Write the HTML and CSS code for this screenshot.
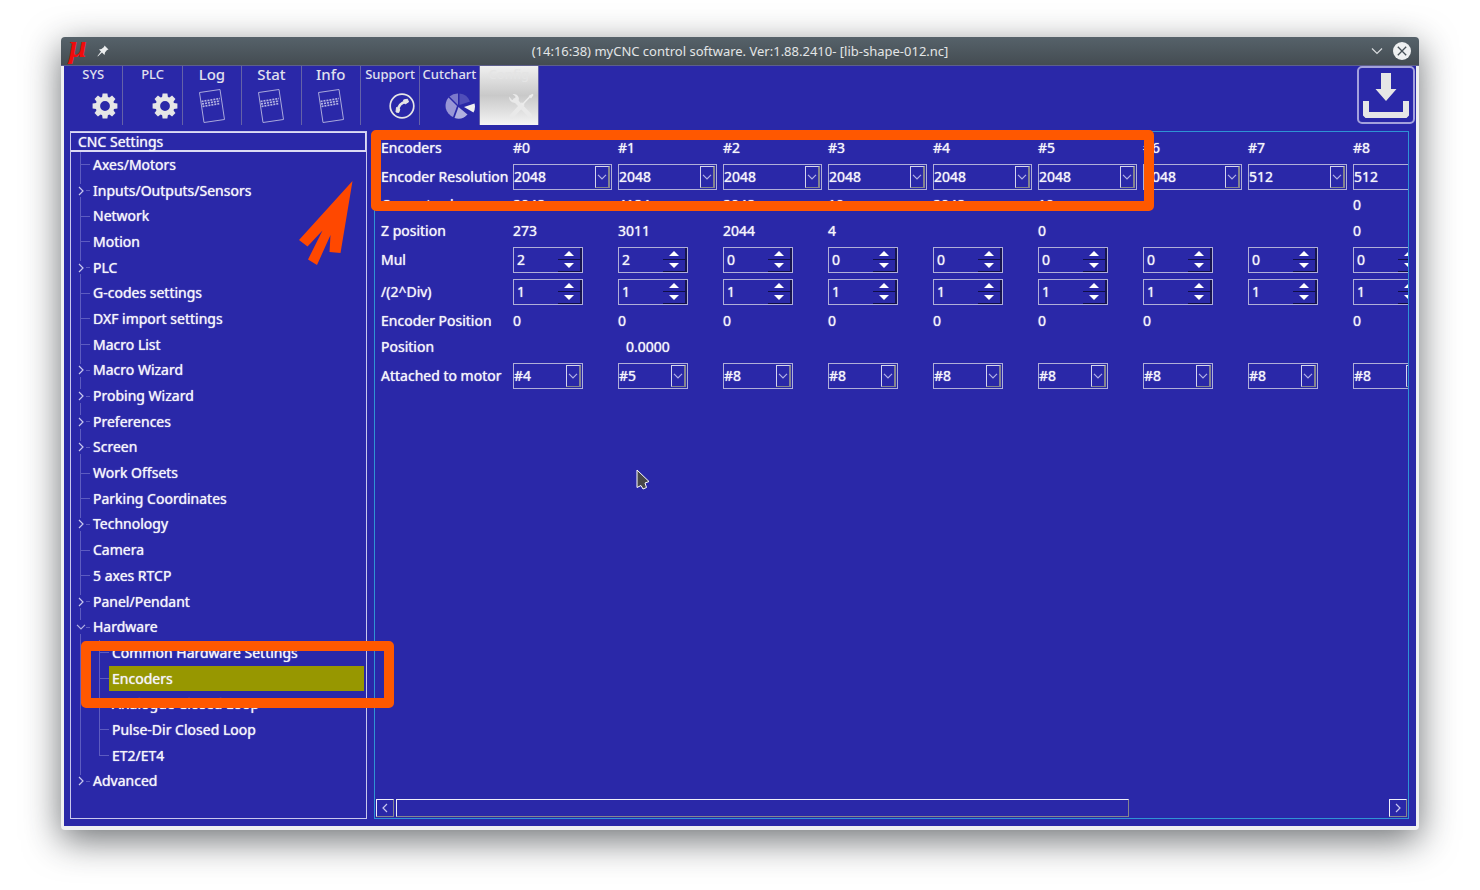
FILE: index.html
```html
<!DOCTYPE html>
<html lang="en">
<head>
  <meta charset="utf-8">
  <title>myCNC control software</title>
  <link rel="stylesheet" href="styles.css">
</head>
<body>

  <!-- shared icon shapes -->
  <svg class="defs" aria-hidden="true">
    <symbol id="gear" viewBox="0 0 26 26">
      <g fill="#e6e6e6">
        <path id="tooth" d="M9.800 6 10.600.6h4.800l.8 5.400z"/>
        <use href="#tooth" transform="rotate(45 13 13)"/>
        <use href="#tooth" transform="rotate(90 13 13)"/>
        <use href="#tooth" transform="rotate(135 13 13)"/>
        <use href="#tooth" transform="rotate(180 13 13)"/>
        <use href="#tooth" transform="rotate(225 13 13)"/>
        <use href="#tooth" transform="rotate(270 13 13)"/>
        <use href="#tooth" transform="rotate(315 13 13)"/>
      </g>
      <circle cx="13" cy="13" r="7.200" fill="none" stroke="#e6e6e6" stroke-width="4.600"/>
    </symbol>
    <symbol id="sheet" viewBox="0 0 28 36">
      <path d="M1.500 4.500 22 1.500 26.500 31.500 6 34.500z" fill="none" stroke="#a9a8dc"/>
      <g fill="none" stroke="#b5b4e2" stroke-width="1.700" stroke-dasharray="2 1">
        <path d="M3.500 13.500 22 10.500M4 16 22 13M4.500 18.500 22 15.500"/>
      </g>
    </symbol>
    <symbol id="down" viewBox="0 0 10 6">
      <path d="M1 .8 5 4.800 9 .8" fill="none" stroke="#b3b2e4" stroke-width="1.200"/>
    </symbol>
    <symbol id="right" viewBox="0 0 6 10">
      <path d="M1 1 5 5 1 9" fill="none" stroke="#c8c7ee" stroke-width="1.200"/>
    </symbol>
  </svg>

  <div class="window">
    <header class="titlebar">
      <div class="title-side">
        <span class="mu">μ</span>
        <svg width="12" height="12" viewBox="0 0 12 12"><path d="M7.500.5 11.500 4.500 10 5 8 7.500 7.500 10 5 7.500.8 11.500.5 11 4 6.500 2 4.500 4.500 4 7 2z" fill="#eceeef"/></svg>
      </div>
      <h1>(14:16:38) myCNC control software. Ver:1.88.2410- [lib-shape-012.nc]</h1>
      <div class="title-side end">
        <button aria-label="Minimize"><svg width="12" height="8" viewBox="0 0 12 8"><path d="M1 1.500 6 6.500 11 1.500" fill="none" stroke="#d8dbdd" stroke-width="1.200"/></svg></button>
        <button aria-label="Close"><svg width="18" height="18" viewBox="0 0 18 18"><circle cx="9" cy="9" r="9" fill="#eff0f1"/><path d="M4.800 4.800 13.200 13.200M13.200 4.800 4.800 13.200" stroke="#475057" stroke-width="1.300"/></svg></button>
      </div>
    </header>

    <div class="client">
      <nav class="toolbar">
        <div class="tools">
          <button class="tool">SYS<svg class="icon"><use href="#gear"/></svg></button>
          <button class="tool">PLC<svg class="icon"><use href="#gear"/></svg></button>
          <button class="tool large">Log<svg class="icon"><use href="#sheet"/></svg></button>
          <button class="tool large">Stat<svg class="icon"><use href="#sheet"/></svg></button>
          <button class="tool large">Info<svg class="icon"><use href="#sheet"/></svg></button>
          <button class="tool">Support
            <svg class="icon" viewBox="0 0 26 26"><circle cx="13" cy="13" r="11.800" fill="none" stroke="#e6e6e6" stroke-width="1.700"/><path d="M9 17.500Q9.500 10.500 17 8.500" fill="none" stroke="#e6e6e6" stroke-width="2.600"/><path d="M7.500 14.500 10.800 16 9.800 19.500 7 19z M14.500 7 18.500 6.200 19.500 9 16 11z" fill="#e6e6e6" stroke="#e6e6e6" stroke-linejoin="round"/></svg>
          </button>
          <button class="tool">Cutchart
            <svg class="icon wide" viewBox="0 0 30 26">
              <path d="M13 12V.5A12.500 12.500 0 0 0 4.500 3.500z" fill="#7b79cb"/>
              <path d="M14.500 12V.5A12.500 12.500 0 0 1 25 8.500z" fill="#504eb8"/>
              <path d="M12 13 3.500 4.500A12.500 12.500 0 0 0 8 24z" fill="#9896d6"/>
              <path d="M13.500 14 9.500 25A12.500 12.500 0 0 0 22.500 21.500z" fill="#b1b0e0"/>
              <path d="M19 14 29.500 10.500A12 12 0 0 1 28.500 19.500z" fill="#f0f0f0"/>
            </svg>
          </button>
          <button class="tool active">Config
            <svg class="icon" viewBox="0 0 26 26"><path d="M7 7 22 22.500" fill="none" stroke="#e9e9e9" stroke-width="4" stroke-linecap="round"/><path d="M4 23 14 12" fill="none" stroke="#e9e9e9" stroke-width="4.500" stroke-linecap="round"/><path d="M14 12 22 3.500" stroke="#ececec" stroke-width="1.600"/><path d="M20.500 3 24.500.8 25.500 2 23 5.500z" fill="#ececec"/><path d="M1 3.500 4 7 7 6.500 7.500 3.500 4.500 1Q9 .5 10.500 4T8.500 10Q1 10.500 1 3.500z" fill="#e9e9e9"/></svg>
          </button>
        </div>
        <button class="save" aria-label="Save settings">
          <svg width="46" height="47" viewBox="0 0 46 47"><path d="M18 1h10v16h5.500L23 29 12.500 17H18zM0 29h6v11h34V29h6v14.500L43.500 46h-41L0 43.500z" fill="#e6e6e6"/></svg>
        </button>
      </nav>

      <div class="panels">
        <aside class="tree">
          <h2>CNC Settings</h2>
          <ul id="tree"></ul>
          <svg class="arrow" width="54" height="84" viewBox="0 0 54 84"><path d="M53.500 0 0 59 8.500 65.500 23.500 49.500 9 78.500 18 84 31.500 54 30.500 71 41.500 72z" fill="#ff4800"/></svg>
        </aside>

        <main class="encoders">
          <div class="viewport">
            <table id="encoders"></table>
          </div>
          <div class="scrollbar">
            <button aria-label="Scroll left"><svg class="flip" width="6" height="10"><use href="#right"/></svg></button>
            <div class="track"><div class="thumb"></div></div>
            <button aria-label="Scroll right"><svg width="6" height="10"><use href="#right"/></svg></button>
          </div>
          <div class="marker columns-marker"></div>
          <svg class="cursor" width="14" height="22" viewBox="0 0 14 22"><path d="M1 1 13 12.500 9 14 10.500 18.500 7 20 5 16.500 1 18.500z" fill="#484848" stroke="#fff"/></svg>
        </main>
      </div>
    </div>
  </div>

  <script>
    // [label, kind]: "leaf", "branch", "open" or "child"
    const items = [
      ['Axes/Motors', 'leaf'],
      ['Inputs/Outputs/Sensors', 'branch'],
      ['Network', 'leaf'],
      ['Motion', 'leaf'],
      ['PLC', 'branch'],
      ['G-codes settings', 'leaf'],
      ['DXF import settings', 'leaf'],
      ['Macro List', 'leaf'],
      ['Macro Wizard', 'branch'],
      ['Probing Wizard', 'branch'],
      ['Preferences', 'branch'],
      ['Screen', 'branch'],
      ['Work Offsets', 'leaf'],
      ['Parking Coordinates', 'leaf'],
      ['Technology', 'branch'],
      ['Camera', 'leaf'],
      ['5 axes RTCP', 'leaf'],
      ['Panel/Pendant', 'branch'],
      ['Hardware', 'open'],
      ['Common Hardware Settings', 'child'],
      ['Encoders', 'child selected'],
      ['Analogue Closed Loop', 'child'],
      ['Pulse-Dir Closed Loop', 'child'],
      ['ET2/ET4', 'child end'],
      ['Advanced', 'branch end']
    ];

    const guides = {
      leaf: '<span class="guide"></span>',
      branch: '<span class="guide gap"><svg width="6" height="10"><use href="#right"/></svg></span>',
      open: '<span class="guide gap"><svg width="10" height="6"><use href="#down"/></svg></span>',
      child: '<span class="guide pass"></span><span class="guide"></span>'
    };

    document.getElementById('tree').innerHTML = items.map(([label, kind]) => {
      const marker = kind.includes('selected') ? '<div class="marker row-marker"></div>' : '';
      return `<li class="${kind}">${guides[kind.split(' ')[0]]}<a href="#">${label}</a>${marker}</li>`;
    }).join('');

    const rows = [
      { label: 'Encoders', kind: 'head', values: ['#0', '#1', '#2', '#3', '#4', '#5', '#6', '#7', '#8'] },
      { label: 'Encoder Resolution', kind: 'select wide', values: [2048, 2048, 2048, 2048, 2048, 2048, 2048, 512, 512] },
      { label: 'Current value', kind: 'text', values: [2048, 4184, 2048, 10, 2048, 10, 0, '', 0] },
      { label: 'Z position', kind: 'text', values: [273, 3011, 2044, 4, '', 0, '', '', 0] },
      { label: 'Mul', kind: 'number', values: [2, 2, 0, 0, 0, 0, 0, 0, 0] },
      { label: '/(2^Div)', kind: 'number', values: [1, 1, 1, 1, 1, 1, 1, 1, 1] },
      { label: 'Encoder Position', kind: 'text', values: [0, 0, 0, 0, 0, 0, 0, '', 0] },
      { label: 'Position', kind: 'text indent', values: ['', '0.0000', '', '', '', '', '', '', ''] },
      { label: 'Attached to motor', kind: 'select', values: ['#4', '#5', '#8', '#8', '#8', '#8', '#8', '#8', '#8'] }
    ];

    function cell(row, value, i) {
      const name = `${row.label} #${i}`;
      if (row.kind === 'head') return `<th scope="col">${value}</th>`;
      if (row.kind.startsWith('select')) {
        return `<td><span class="field ${row.kind}"><select aria-label="${name}"><option>${value}</option></select>` +
          `<span class="drop"><svg width="10" height="6"><use href="#down"/></svg></span></span></td>`;
      }
      if (row.kind === 'number') {
        return `<td><span class="field"><input type="number" aria-label="${name}" value="${value}">` +
          `<span class="spin"><button class="up" aria-label="Increase ${name}"></button>` +
          `<button class="dn" aria-label="Decrease ${name}"></button></span></span></td>`;
      }
      return `<td>${value}</td>`;
    }

    document.getElementById('encoders').innerHTML = rows.map(row =>
      `<tr class="${row.kind}"><th scope="row">${row.label}</th>${row.values.map((v, i) => cell(row, v, i)).join('')}</tr>`
    ).join('');

    document.querySelectorAll('.spin button').forEach(button => {
      button.addEventListener('click', () => {
        const input = button.closest('.field').querySelector('input');
        if (button.className === 'up') input.stepUp();
        else input.stepDown();
      });
    });
  </script>

</body>
</html>
```

FILE: styles.css
```css
* {
  box-sizing: border-box;
}

body {
  margin: 0;
  padding: 37px 61px 60px;
  background: #fff;
  color: #f4f4fa;
  font-family: "Noto Sans", sans-serif;
  font-size: 14px;
  line-height: 20px;
}

button {
  padding: 0;
  border: 0;
  background: none;
  color: inherit;
  font: inherit;
}

svg {
  display: block;
}

.defs {
  position: absolute;
  width: 0;
  height: 0;
}

.window {
  display: flex;
  flex-direction: column;
  min-height: calc(100vh - 97px);
  border-radius: 4px;
  background: #eff0f1;
  box-shadow: 0 10px 36px rgba(30, 36, 40, 0.65);
}

/* title bar */

.titlebar {
  display: flex;
  align-items: center;
  height: 29px;
  padding: 0 8px;
  border-radius: 4px 4px 0 0;
  background: linear-gradient(#56626a, #444c52);
  border-bottom: 1px solid #5d5f8c;
}

.titlebar h1 {
  margin: 0;
  color: #e3e5e6;
  font-size: 13px;
  font-weight: 400;
}

.title-side {
  display: flex;
  flex: 1;
  align-items: center;
  gap: 10px;
}

.title-side.end {
  justify-content: flex-end;
}

.mu {
  padding-bottom: 10px;
  color: #f00c0c;
  font: italic bold 32px/18px "Liberation Serif", serif;
}

/* client area */

.client {
  display: flex;
  flex: 1;
  flex-direction: column;
  margin: 0 3px 4px;
  background: #2a28a8;
  text-shadow: 0 0 1px;
}

.toolbar {
  display: flex;
  justify-content: space-between;
  padding-right: 1px;
}

.tools {
  display: grid;
  grid-template-columns: repeat(8, 1fr);
  width: 475px;
}

.tool {
  display: flex;
  flex-direction: column;
  align-items: center;
  height: 59px;
  border-right: 1px solid #6462a8;
  color: #e0e0ee;
  font-size: 13px;
  font-weight: 500;
  line-height: 16px;
  text-shadow: none;
}

.tool.large {
  font-size: 15px;
}

.tool .icon {
  width: 26px;
  height: 26px;
  margin: 11px 4px 0 0;
  align-self: flex-end;
}

.tool .icon.wide {
  width: 30px;
}

.tool.large .icon {
  width: 28px;
  height: 36px;
  margin: 6px 0 0;
  align-self: center;
}

.tool.active {
  background: linear-gradient(#f0f0f0, #c9c9c9 50%, #f4f4f4);
  color: #e4e4e4;
}

.save {
  display: flex;
  align-items: center;
  justify-content: center;
  width: 58px;
  height: 58px;
  border: 2px solid #a3a1dc;
  border-radius: 5px;
}

.panels {
  display: flex;
  flex: 1;
  gap: 7px;
  padding: 6px 7px 7px 6px;
}

/* settings tree */

.tree {
  position: relative;
  display: flex;
  flex-direction: column;
  width: 297px;
  border: 1px solid #c9c8ec;
}

.tree h2 {
  height: 20px;
  margin: 0;
  padding-left: 7px;
  border: solid #dcdbf4;
  border-width: 1px 1px 2px 0;
  font-size: 14px;
  font-weight: 400;
  line-height: 18px;
}

.tree ul {
  display: flex;
  flex: 1;
  flex-direction: column;
  margin: 0;
  padding: 0 0 24px;
  list-style: none;
}

.tree li {
  position: relative;
  display: flex;
  flex: 1;
}

.tree a {
  display: flex;
  flex: 1;
  align-items: center;
  margin-right: 2px;
  padding-left: 3px;
  color: inherit;
  text-decoration: none;
}

.tree .selected a {
  background: #979700;
}

.guide {
  display: flex;
  align-items: center;
  justify-content: center;
  width: 19px;
  background:
    linear-gradient(#5d5bc0, #5d5bc0) 9px 0 / 1px 100% no-repeat,
    linear-gradient(#5d5bc0, #5d5bc0) 9px 50% / 10px 1px no-repeat;
}

.guide.pass {
  background: linear-gradient(#5d5bc0, #5d5bc0) 9px 0 / 1px 100% no-repeat;
}

.guide.gap {
  background:
    linear-gradient(#5d5bc0, #5d5bc0) 9px 0 / 1px 6px no-repeat,
    linear-gradient(#5d5bc0, #5d5bc0) 9px 100% / 1px 6px no-repeat,
    linear-gradient(#5d5bc0, #5d5bc0) 15px 50% / 4px 1px no-repeat;
}

.child.end .guide:not(.pass) {
  background-size: 1px 50%, 10px 1px;
}

.branch.end .guide {
  background-size: 1px 6px, 0 0, 4px 1px;
}

/* encoder table */

.encoders {
  position: relative;
  display: flex;
  flex: 1;
  flex-direction: column;
  min-width: 0;
  border: 1px solid #2f93d4;
}

.viewport {
  flex: 1;
  overflow: hidden;
  padding: 3px 0 0 6px;
}

table {
  width: 1077px;
  table-layout: fixed;
  border-collapse: collapse;
}

th,
td {
  width: 105px;
  height: 26px;
  padding: 0;
  font-weight: 400;
  text-align: left;
  white-space: nowrap;
}

th:first-child {
  width: 132px;
}

.select td {
  height: 31px;
}

.number td {
  height: 32px;
}

.indent td {
  padding-left: 8px;
}

.field {
  position: relative;
  display: flex;
  width: 70px;
  height: 26px;
  border: 1px solid #b0afd8;
}

.field.wide {
  width: 99px;
}

.field select,
.field input {
  width: 100%;
  min-width: 0;
  padding: 0;
  border: 0;
  outline: 0;
  background: none;
  color: inherit;
  font: inherit;
  text-shadow: inherit;
  appearance: none;
}

.field input {
  padding-left: 3px;
  appearance: textfield;
}

.drop {
  position: absolute;
  top: 1px;
  right: 1px;
  bottom: 1px;
  display: flex;
  align-items: center;
  justify-content: center;
  width: 15px;
  border: solid #d5d4ee;
  border-width: 1px 2px 1px 1px;
  border-right-color: #85858f;
  border-bottom-color: #85858f;
  pointer-events: none;
}

.spin {
  position: absolute;
  top: 0;
  right: 0;
  bottom: 0;
  display: flex;
  flex-direction: column;
  width: 24px;
}

.spin button {
  display: flex;
  flex: 1;
  align-items: center;
  justify-content: center;
  border-right: 2px solid #17154f;
  border-bottom: 1px solid #100e48;
}

.spin button::before {
  content: "";
  border: 5px solid transparent;
}

.spin .up::before {
  border-top: 0;
  border-bottom: 5px solid #fff;
}

.spin .dn::before {
  border-top: 5px solid #fff;
  border-bottom: 0;
}

.scrollbar {
  display: flex;
  gap: 2px;
  padding: 0 1px 1px;
}

.scrollbar button,
.thumb {
  height: 18px;
  border: 1px solid #f0f0fa;
  border-right-color: #85858f;
  border-bottom-color: #85858f;
}

.scrollbar button {
  display: flex;
  align-items: center;
  justify-content: center;
  width: 18px;
}

.track {
  flex: 1;
}

.thumb {
  width: 74%;
}

.flip {
  transform: scaleX(-1);
}

/* highlights over the panels */

.marker {
  position: absolute;
  border: 10px solid #ff5800;
  border-radius: 5px;
  pointer-events: none;
}

.row-marker {
  top: -25px;
  right: -28px;
  bottom: -17px;
  left: 10px;
  z-index: 1;
}

.columns-marker {
  top: -2px;
  left: -4px;
  width: 783px;
  height: 81px;
}

.arrow {
  position: absolute;
  top: 49px;
  left: 228px;
}

.cursor {
  position: absolute;
  top: 337px;
  left: 261px;
}
```
